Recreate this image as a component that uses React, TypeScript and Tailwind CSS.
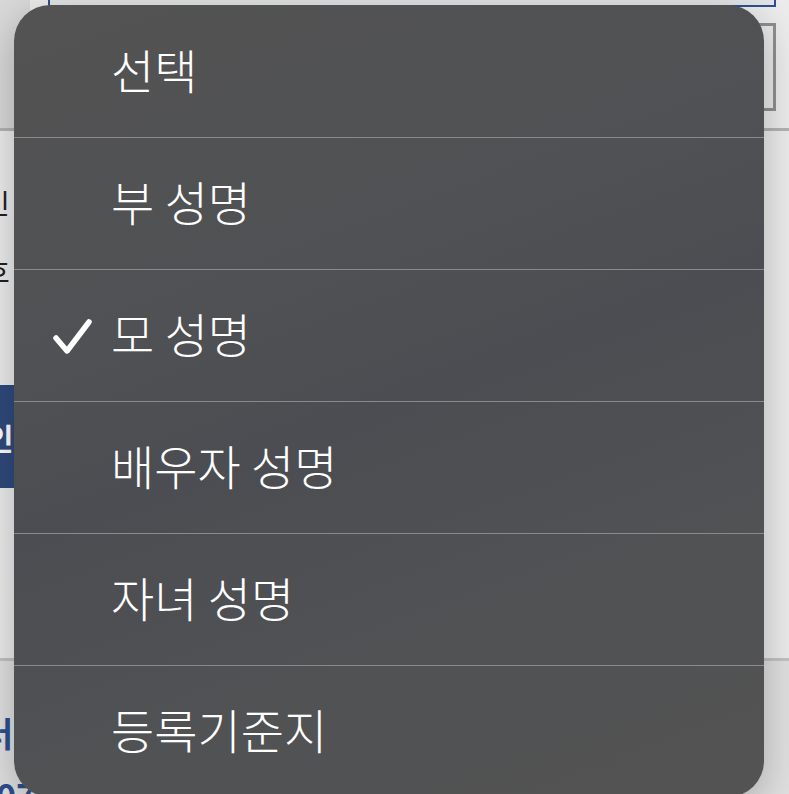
import React from 'react';

const options = ['선택', '부 성명', '모 성명', '배우자 성명', '자녀 성명', '등록기준지'];

const CheckIcon = () => (
  <svg width="40" height="40" viewBox="0 0 40 40" fill="none">
    <path d="M4 21 L15 34 L37 5" stroke="white" strokeWidth="5.5" strokeLinecap="round" strokeLinejoin="round" />
  </svg>
);

export default function App() {
  const selected = '모 성명';

  return (
    <div className="relative w-[789px] h-[794px] overflow-hidden bg-[#ececec] font-['Noto_Sans_CJK_KR',sans-serif]">
      {/* page behind the picker */}
      <div className="flex flex-col h-full">
        <div className="flex shrink-0 h-[128px] bg-[#ececec]">
          <div className="w-[30px] bg-[#d9d9d9]" />
          <div className="flex-1 flex flex-col">
            <div className="mt-[-40px] ml-[18px] mr-[13px] h-[47px] border-2 border-[#2d4f95] bg-[#e3e5e7]" />
            <div className="mt-[16px] ml-auto mr-[13px] w-[400px] h-[88px] border-[3px] border-[#8f8f8f] bg-[#e9e9e9]" />
          </div>
        </div>
        <div className="shrink-0 h-[3px] bg-[#b3b3b3]" />
        <div className="flex flex-col shrink-0 h-[527px] bg-[#ececec]">
          <div className="mt-[52px] ml-[-16px] text-[28px] leading-[40px] text-[#222]">민</div>
          <div className="mt-[28px] ml-[-16px] text-[28px] leading-[40px] text-[#222]">호</div>
          <div className="mt-[94px] h-[103px] w-[200px] bg-[#2f4a7c] flex flex-col justify-center">
            <span className="ml-[-14px] text-[30px] leading-[34px] font-bold text-white">인증</span>
          </div>
        </div>
        <div className="shrink-0 h-[3px] bg-[#c2c2c2]" />
        <div className="flex-1 bg-[#e0e0e0] flex flex-col">
          <div className="mt-[52px] ml-[-18px] text-[34px] leading-[40px] font-bold text-[#2b4f8f]">터</div>
          <div className="mt-[22px] ml-[-4px] text-[34px] leading-[40px] font-bold text-[#2b4f8f]">07</div>
        </div>
      </div>

      {/* iOS style picker menu */}
      <div className="absolute left-[14px] top-[5px] w-[750px] rounded-[36px] overflow-hidden bg-[linear-gradient(160deg,#535353_0%,#505154_35%,#4b4d52_50%,#515254_75%,#535353_100%)] shadow-[0_10px_40px_rgba(0,0,0,0.25)]">
        {options.map((opt, i) => (
          <div
            key={opt}
            className={`relative flex items-center h-[132px] pl-[97px] pb-[6px] ${i > 0 ? 'border-t border-[#8a8a8a]' : ''}`}
          >
            {opt === selected && (
              <span className="absolute left-[38px] top-[47px]">
                <CheckIcon />
              </span>
            )}
            <span className="text-[47px] leading-none font-light text-white">{opt}</span>
          </div>
        ))}
      </div>
    </div>
  );
}
